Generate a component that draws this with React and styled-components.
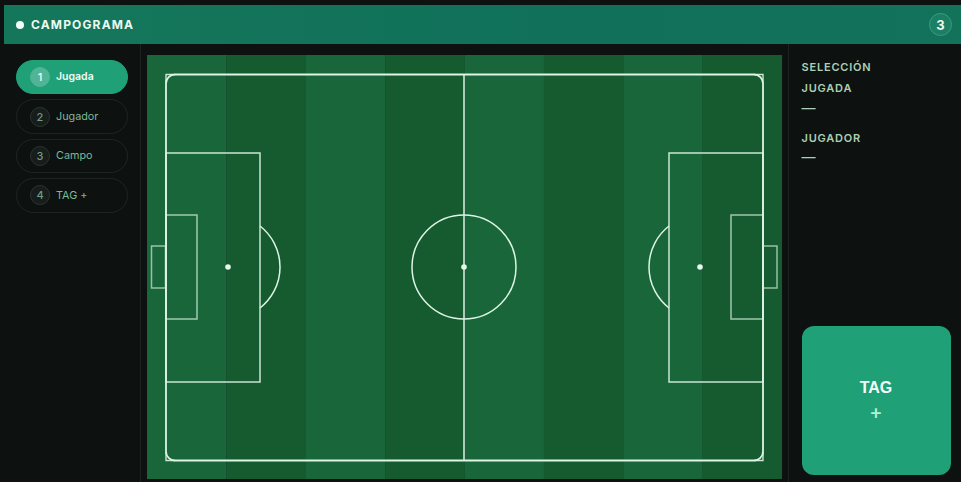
import React from 'react'
import styled, { createGlobalStyle } from 'styled-components'

const steps = [
    { n: 1, label: 'Jugada', active: true },
    { n: 2, label: 'Jugador' },
    { n: 3, label: 'Campo' },
    { n: 4, label: 'TAG +' },
]

const stripes = [0, 1, 2, 3, 4, 5, 6, 7]

function Pitch() {
    return (
        <PitchSvg viewBox="0 0 635 424">
            {stripes.map(i => (
                <rect key={i} x={i * 79.375} y="0" width="79.6" height="424" fill={i % 2 ? '#165a30' : '#19663a'} />
            ))}
            <g fill="none" stroke="#dcf5e4" strokeWidth="1.5">
                <rect x="19" y="19.5" width="597" height="386" rx="9" strokeWidth="1.8" />
                <path d="M19 28 V19.5 H28 M607 19.5 H616 V28 M616 397 V405.5 H607 M28 405.5 H19 V397" strokeWidth="1.4" opacity="0.9" />
                <line x1="317" y1="19" x2="317" y2="405" />
                <circle cx="317" cy="212" r="52" />
                <rect x="19" y="98" width="94" height="229" opacity="0.9" />
                <rect x="19" y="160" width="31" height="104" opacity="0.7" />
                <rect x="4.5" y="191" width="14" height="42" opacity="0.65" />
                <path d="M113 171 A52 52 0 0 1 113 253" />
                <rect x="522" y="98" width="94" height="229" opacity="0.9" />
                <rect x="584" y="160" width="32" height="104" opacity="0.7" />
                <rect x="616" y="191" width="14" height="42" opacity="0.65" />
                <path d="M522 171 A52 52 0 0 0 522 253" />
            </g>
            <circle cx="81" cy="212" r="2.8" fill="#e6f8ec" />
            <circle cx="317" cy="212" r="2.8" fill="#e6f8ec" />
            <circle cx="553" cy="212" r="2.8" fill="#e6f8ec" />
        </PitchSvg>
    )
}

function App() {
    return (
        <Page>
            <GlobalStyle />
            <Header>
                <Brand>
                    <Dot />
                    <Title>CAMPOGRAMA</Title>
                </Brand>
                <Counter>3</Counter>
            </Header>
            <Body>
                <Sidebar>
                    {steps.map(s => (
                        <StepPill key={s.n} active={s.active}>
                            <StepNum active={s.active}>{s.n}</StepNum>
                            <StepLabel active={s.active}>{s.label}</StepLabel>
                        </StepPill>
                    ))}
                </Sidebar>
                <Main>
                    <Pitch />
                </Main>
                <Panel>
                    <PanelLabel>SELECCIÓN</PanelLabel>
                    <PanelField>
                        <PanelLabel>JUGADA</PanelLabel>
                        <Dash>—</Dash>
                    </PanelField>
                    <PanelField>
                        <PanelLabel>JUGADOR</PanelLabel>
                        <Dash>—</Dash>
                    </PanelField>
                    <TagButton>
                        <span>TAG</span>
                        <Plus>+</Plus>
                    </TagButton>
                </Panel>
            </Body>
        </Page>
    )
}

export default App

const GlobalStyle = createGlobalStyle`
    html, body {
        margin: 0;
        padding: 0;
        background: #0d1211;
    }
`

const Page = styled.div`
    width: 961px;
    height: 482px;
    overflow: hidden;
    display: flex;
    flex-direction: column;
    padding-top: 5px;
    box-sizing: border-box;
    background: #0d1211;
    font-family: Inter, "Liberation Sans", sans-serif;
`

const Header = styled.div`
    height: 39px;
    margin-left: 4px;
    padding: 0 9px 0 12px;
    display: flex;
    align-items: center;
    justify-content: space-between;
    flex-shrink: 0;
    background: linear-gradient(90deg, #15775a 0%, #10705a 60%, #12725a 100%);
`

const Brand = styled.div`
    display: flex;
    align-items: center;
    gap: 7px;
`

const Dot = styled.span`
    width: 8px;
    height: 8px;
    border-radius: 50%;
    background: #f2fbf6;
`

const Title = styled.span`
    color: #ecf9f2;
    font-size: 12px;
    font-weight: 700;
    letter-spacing: 1.15px;
`

const Counter = styled.span`
    width: 23px;
    height: 23px;
    box-sizing: border-box;
    border-radius: 50%;
    border: 1px solid #3f9a80;
    background: #1b7f64;
    color: #ecf9f2;
    font-size: 13px;
    font-weight: 700;
    display: flex;
    align-items: center;
    justify-content: center;
`

const Body = styled.div`
    flex: 1;
    display: flex;
    min-height: 0;
`

const Sidebar = styled.div`
    width: 141px;
    box-sizing: border-box;
    padding: 16px 12px 0 16px;
    display: flex;
    flex-direction: column;
    gap: 5px;
    border-right: 1px solid #1c2220;
`

const StepPill = styled.div`
    height: 34.4px;
    box-sizing: border-box;
    border-radius: 18px;
    padding: 0 13px;
    display: flex;
    align-items: center;
    gap: 6px;
    background: ${props => (props.active ? '#1fa076' : 'transparent')};
    border: 1px solid ${props => (props.active ? '#1fa076' : '#1d2523')};
`

const StepLabel = styled.span`
    font-size: ${props => (props.active ? '10.5px' : '10.8px')};
    font-weight: ${props => (props.active ? 600 : 400)};
    color: ${props => (props.active ? '#f2fbf6' : '#7fb896')};
    margin-bottom: ${props => (props.active ? '2px' : '0')};
`

const StepNum = styled.span`
    width: 20px;
    height: 20px;
    box-sizing: border-box;
    border-radius: 50%;
    display: flex;
    align-items: center;
    justify-content: center;
    font-size: 11px;
    font-weight: 500;
    color: ${props => (props.active ? '#f2fbf6' : '#6f9c82')};
    background: ${props => (props.active ? '#4fb596' : '#161d1b')};
    border: 1px solid ${props => (props.active ? '#4fb596' : '#2b3431')};
`

const Main = styled.div`
    width: 647px;
    box-sizing: border-box;
    padding: 11px 6px 3px 6px;
`

const PitchSvg = styled.svg`
    display: block;
    width: 635px;
    height: 424px;
`

const Panel = styled.div`
    flex: 1;
    box-sizing: border-box;
    padding: 17px 10px 7px 12.5px;
    display: flex;
    flex-direction: column;
    border-left: 1px solid #1c2220;
`

const PanelLabel = styled.div`
    color: #adcfb4;
    font-size: 11px;
    font-weight: 600;
    letter-spacing: 0.8px;
    line-height: 13px;
`

const PanelField = styled.div`
    margin-top: 8px;
    margin-bottom: 8px;
`

const Dash = styled.div`
    color: #adcfb4;
    font-size: 14px;
    line-height: 17px;
    margin-top: 3.5px;
`

const TagButton = styled.div`
    margin-top: auto;
    width: 149px;
    height: 149px;
    border-radius: 12px;
    background: #1fa076;
    color: #f4fcf8;
    font-family: "Liberation Sans", Arial, sans-serif;
    font-size: 16px;
    font-weight: 700;
    display: flex;
    flex-direction: column;
    align-items: center;
    justify-content: center;
    gap: 4px;
    padding-top: 1px;
    box-sizing: border-box;
`

const Plus = styled.span`
    color: #b5f0d8;
    font-family: Inter, sans-serif;
    font-size: 20px;
    font-weight: 500;
    line-height: 22px;
`
